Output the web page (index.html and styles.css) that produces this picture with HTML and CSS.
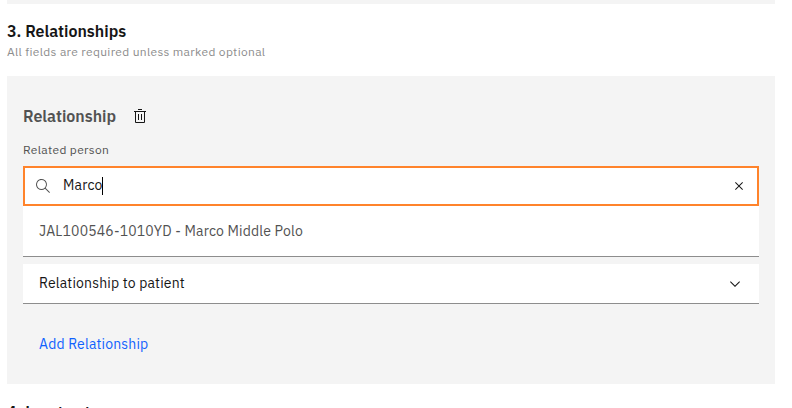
FILE: index.html
```html
<!DOCTYPE html>
<html lang="en">
<head>
    <meta charset="UTF-8">
    <meta name="viewport" content="width=device-width, initial-scale=1.0">
    <title>Patient Registration</title>
    <link rel="stylesheet" href="styles.css">
</head>
<body>

    <main class="form">
        <div class="previous-section"></div>

        <section class="section">
            <h3 class="section-title">3. Relationships</h3>
            <p class="section-hint">All fields are required unless marked optional</p>

            <div class="panel">
                <div class="panel-header">
                    <h4 class="panel-title">Relationship</h4>
                    <button class="icon-button" aria-label="Delete">
                        <svg width="16" height="16" viewBox="0 0 32 32" fill="#161616">
                            <path d="M12 12h2v12h-2zM18 12h2v12h-2z"/>
                            <path d="M4 6v2h2v20a2 2 0 0 0 2 2h16a2 2 0 0 0 2-2V8h2V6zM8 28V8h16v20zM12 2h8v2h-8z"/>
                        </svg>
                    </button>
                </div>

                <div class="label">Related person</div>
                <div class="search">
                    <svg class="search-icon" width="16" height="16" viewBox="0 0 16 16" fill="#525252">
                        <path d="M15 14.3L10.7 10c1.9-2.3 1.6-5.8-.7-7.7S4.2.7 2.3 3 .7 8.8 3 10.7c2 1.7 5 1.7 7 0l4.3 4.3.7-.7zM2 6.5C2 4 4 2 6.5 2S11 4 11 6.5 9 11 6.5 11 2 9 2 6.5z"/>
                    </svg>
                    <span class="search-text">Marco</span>
                    <span class="caret"></span>
                    <svg class="clear-icon" width="16" height="16" viewBox="0 0 32 32" fill="#161616">
                        <path d="M24 9.4L22.6 8 16 14.6 9.4 8 8 9.4l6.6 6.6L8 22.6 9.4 24l6.6-6.6 6.6 6.6 1.4-1.4-6.6-6.6L24 9.4z"/>
                    </svg>
                </div>
                <div class="result">JAL100546-1010YD - Marco Middle Polo</div>

                <div class="select">
                    <span class="select-text">Relationship to patient</span>
                    <svg width="16" height="16" viewBox="0 0 16 16" fill="#161616">
                        <path d="M8 11L3 6l.7-.7L8 9.6l4.3-4.3.7.7z"/>
                    </svg>
                </div>

                <button class="add-button">Add Relationship</button>
            </div>
        </section>

        <section class="next-section">
            <h3 class="section-title next-title">4. Leart act</h3>
        </section>
    </main>

</body>
</html>
```
FILE: styles.css
```css
body {
    margin: 0;
    height: 408px;
    overflow: hidden;
    background-color: #fff;
    color: #161616;
    font-family: "IBM Plex Sans", Roboto, "Liberation Sans", sans-serif;
    font-size: 14px;
}

h3, h4, p {
    margin: 0;
}

button {
    padding: 0;
    border: none;
    background: none;
    font-family: inherit;
}

svg {
    display: block;
    flex: none;
}

.form {
    width: 768px;
    margin-left: 7px;
}

.previous-section {
    height: 4px;
    background-color: #f4f4f4;
}

.section-title {
    padding-top: 16px;
    font-size: 16px;
    font-weight: 600;
    line-height: 22px;
    white-space: nowrap;
}

.section-hint {
    padding-top: 2px;
    color: #8d8d8d;
    font-size: 12px;
    line-height: 16px;
    letter-spacing: 0.32px;
}

.panel {
    height: 280px;
    margin-top: 16px;
    padding: 28px 16px 0;
    background-color: #f4f4f4;
}

.panel-header {
    display: flex;
    align-items: center;
    gap: 16px;
    height: 24px;
}

.panel-title {
    color: #525252;
    font-size: 16px;
    font-weight: 600;
}

.label {
    margin-top: 14px;
    color: #525252;
    font-size: 12px;
    line-height: 16px;
    letter-spacing: 0.32px;
}

.search {
    display: flex;
    align-items: center;
    box-sizing: border-box;
    height: 40px;
    margin-top: 8px;
    padding: 0 10px;
    border: 2px solid #ff832b;
    background-color: #fff;
}

.search-text {
    margin-left: 12px;
    padding-bottom: 2px;
    letter-spacing: 0.16px;
}

.caret {
    width: 1px;
    height: 18px;
    margin-left: -1px;
    background-color: #000;
}

.clear-icon {
    margin-left: auto;
}

.result {
    height: 50px;
    padding-left: 16px;
    border-bottom: 1px solid #8d8d8d;
    background-color: #fff;
    color: #525252;
    line-height: 51px;
    letter-spacing: 0.16px;
}

.select {
    display: flex;
    align-items: center;
    justify-content: space-between;
    height: 39px;
    margin-top: 7px;
    padding: 0 16px;
    border-bottom: 1px solid #8d8d8d;
    background-color: #fff;
    letter-spacing: 0.16px;
}

.select-text {
    padding-bottom: 1px;
}

.add-button {
    margin: 31px 0 0 16px;
    color: #0f62fe;
    font-size: 14px;
    line-height: 18px;
    letter-spacing: 0.16px;
}

.next-title {
    padding-top: 17px;
}
```
